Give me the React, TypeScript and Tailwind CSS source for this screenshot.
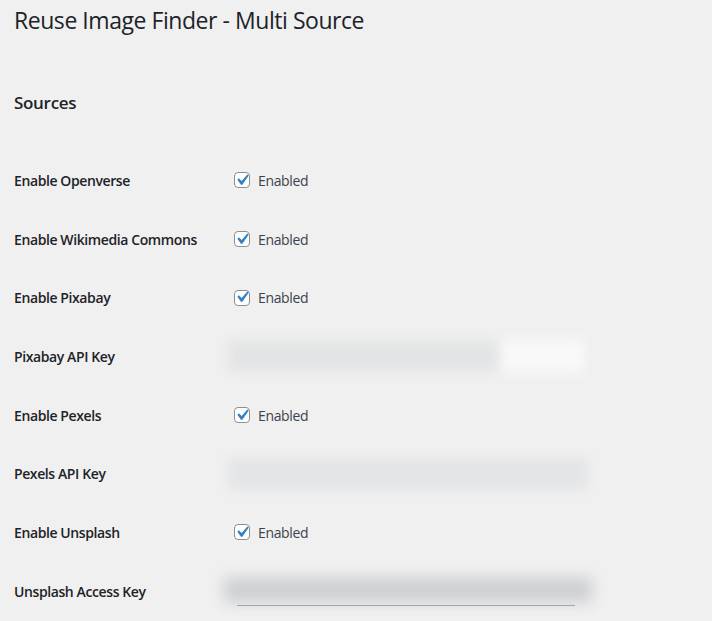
import { ReactNode } from 'react';

type Row = { label: string; kind: 'check' | 'key'; tone?: 'light' | 'mid' | 'dark' };

const ROWS: Row[] = [
    { label: 'Enable Openverse', kind: 'check' },
    { label: 'Enable Wikimedia Commons', kind: 'check' },
    { label: 'Enable Pixabay', kind: 'check' },
    { label: 'Pixabay API Key', kind: 'key', tone: 'light' },
    { label: 'Enable Pexels', kind: 'check' },
    { label: 'Pexels API Key', kind: 'key', tone: 'mid' },
    { label: 'Enable Unsplash', kind: 'check' },
    { label: 'Unsplash Access Key', kind: 'key', tone: 'dark' },
];

function Checkbox() {
    return (
        <span className="w-4 h-4 rounded-[4px] border border-[#8c8f94] bg-white flex items-center justify-center overflow-visible">
            <svg viewBox="0 0 20 20" className="w-[22px] h-[22px] shrink-0 -mt-[1px]">
                <path d="M14.83 4.89l1.34.94-5.81 8.38H9.02L5.78 9.67l1.34-1.25 2.57 2.4z" fill="#3582c4" />
            </svg>
        </span>
    );
}

// the keys are blurred out in the screenshot
function BlurredKey({ tone }: { tone: Row['tone'] }) {
    if (tone === 'dark') {
        return (
            <div className="w-[368px] -ml-[10px] flex flex-col">
                <div className="h-[26px] bg-[#cfd0d2] blur-[7px]" />
                <div className="ml-[13px] mr-[17px] mt-[2px] h-[1px] bg-[#8c8f94]" />
            </div>
        );
    }
    if (tone === 'light') {
        return (
            <div className="w-[356px] -ml-[6px] flex h-[32px] blur-[6px]">
                <div className="w-[272px] bg-[#e3e4e5]" />
                <div className="flex-1 bg-[#f9f9f9]" />
            </div>
        );
    }
    return <div className="w-[360px] -ml-[6px] h-[32px] bg-[#e4e5e6] blur-[5px]" />;
}

function Field({ row }: { row: Row }): ReactNode {
    if (row.kind === 'check') {
        return (
            <label className="flex items-center gap-[8px] text-[14px] tracking-[-0.35px] text-[#3c434a]">
                <Checkbox />
                Enabled
            </label>
        );
    }
    return <BlurredKey tone={row.tone} />;
}

export default function App() {
    return (
        <div className="min-h-[621px] bg-[#f0f0f1] pl-[14px] text-[#1d2327] font-['Segoe_UI','Open_Sans',sans-serif] overflow-hidden">
            <h1 className="text-[23px] leading-[29px] pt-[6px] font-normal tracking-[-0.45px]">Reuse Image Finder - Multi Source</h1>
            <h2 className="text-[17px] leading-[22px] font-semibold mt-[57px] tracking-[-0.3px]">Sources</h2>
            <div className="mt-[37px]">
                {ROWS.map(r => (
                    <div key={r.label} className="flex items-center h-[58.7px]">
                        <div className="w-[220px] shrink-0 text-[14px] font-semibold tracking-[-0.4px]">{r.label}</div>
                        <Field row={r} />
                    </div>
                ))}
            </div>
        </div>
    );
}
